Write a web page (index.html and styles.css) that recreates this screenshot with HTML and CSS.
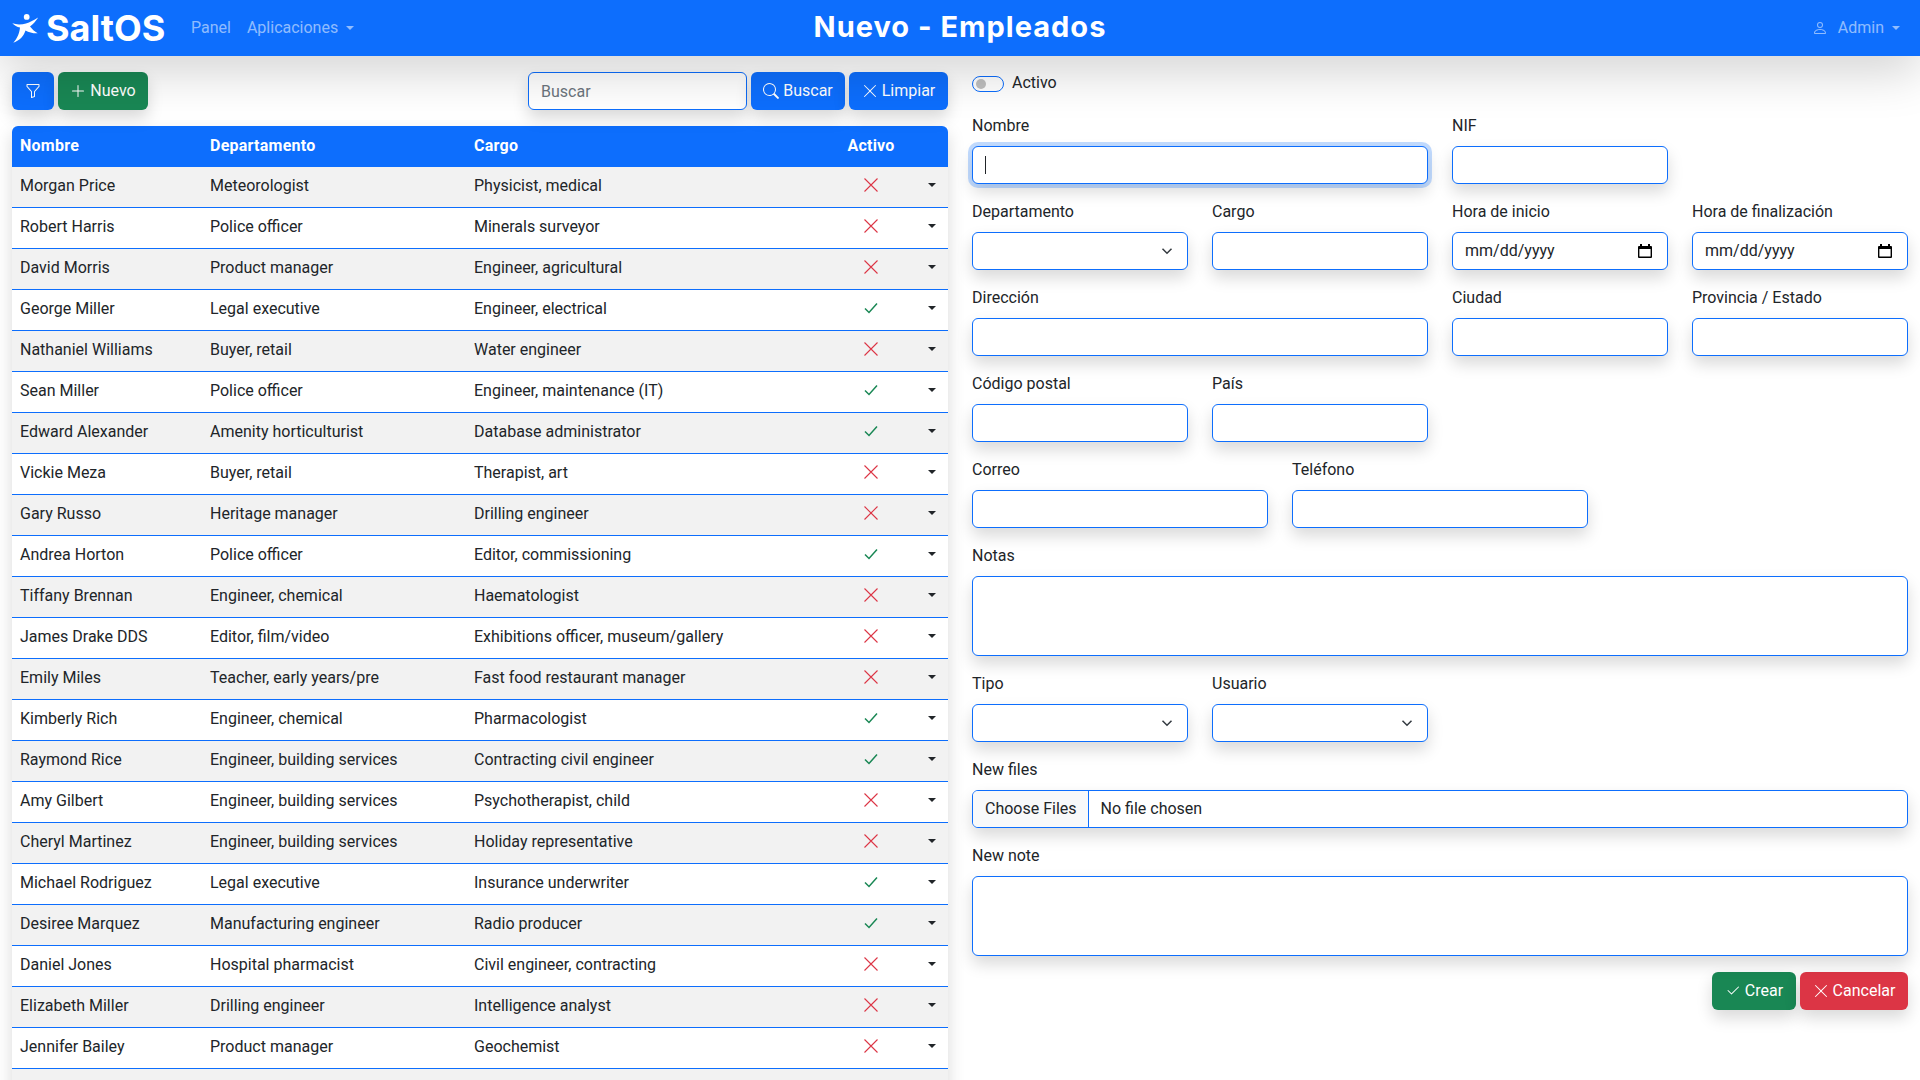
FILE: index.html
```html
<!DOCTYPE html>
<html lang="es">
<head>
<meta charset="utf-8">
<title>SaltOS</title>
<link rel="stylesheet" href="styles.css">
</head>
<body>
<header class="navbar">
  <div class="nav-left">
    <a class="brand"><svg class="logo" viewBox="0 0 26 29"><circle cx="14.700" cy="2.900" r="2.900"/><path d="M.3 9.300C5 11 10 10.500 14 9.500 18 8.500 22 6 26.300 3.300 24 7 21 10.500 18 12.500 20 15 22.500 17.500 25.700 19.300 21 19.500 17 18.500 13.500 16.500 12 21.500 8 26.500 1.300 28.700 5.500 24.500 7.500 18.500 8 13.500 5 13 2.500 11.500.3 9.300Z"/></svg>SaltOS</a>
    <a class="nav-link">Panel</a>
    <a class="nav-link caret">Aplicaciones</a>
  </div>
  <h1 class="page-title">Nuevo - Empleados</h1>
  <div class="nav-right">
    <a class="nav-link caret"><svg class="ico user" viewBox="0 0 16 16"><path d="M8 8a3 3 0 1 0 0-6 3 3 0 0 0 0 6Zm2-3a2 2 0 1 1-4 0 2 2 0 0 1 4 0Zm4 8c0 1-1 1-1 1H3s-1 0-1-1 1-4 6-4 6 3 6 4Zm-1-.004c-.001-.246-.154-.986-.832-1.664C11.516 10.68 10.289 10 8 10c-2.29 0-3.516.68-4.168 1.332-.678.678-.83 1.418-.832 1.664h10Z"/></svg>Admin</a>
  </div>
</header>
<main class="content">
  <section class="left">
    <div class="toolbar">
      <div class="group">
        <button class="btn blue square"><svg class="ico" viewBox="0 0 16 16"><path d="M1.5 1.5A.5.5 0 0 1 2 1h12a.5.5 0 0 1 .5.5v2a.5.5 0 0 1-.128.334L10 8.692V13.500a.5.5 0 0 1-.342.474l-3 1A.5.5 0 0 1 6 14.500V8.692L1.628 3.834A.5.5 0 0 1 1.500 3.500v-2Zm1 .5v1.308l4.372 4.858A.5.5 0 0 1 7 8.500v5.306l2-.666V8.500a.5.5 0 0 1 .128-.334L13.500 3.308V2h-11Z"/></svg></button>
        <button class="btn green w90"><svg class="ico" viewBox="0 0 16 16"><path d="M8 2a.5.5 0 0 1 .5.5v5h5a.5.5 0 0 1 0 1h-5v5a.5.5 0 0 1-1 0v-5h-5a.5.5 0 0 1 0-1h5v-5A.5.5 0 0 1 8 2Z"/></svg>Nuevo</button>
      </div>
      <div class="group">
        <input class="search" type="text" placeholder="Buscar">
        <button class="btn blue w94"><svg class="ico" viewBox="0 0 16 16"><path d="M11.742 10.344a6.500 6.500 0 1 0-1.397 1.398l3.850 3.850a1 1 0 0 0 1.415-1.414l-3.868-3.834ZM12 6.500a5.500 5.500 0 1 1-11 0 5.500 5.500 0 0 1 11 0Z"/></svg>Buscar</button>
        <button class="btn blue w99"><svg class="ico" viewBox="0 0 16 16"><path d="M2.146 2.854a.5.5 0 1 1 .708-.708L8 7.293l5.146-5.147a.5.5 0 0 1 .708.708L8.707 8l5.147 5.146a.5.5 0 0 1-.708.708L8 8.707l-5.146 5.147a.5.5 0 0 1-.708-.708L7.293 8 2.146 2.854Z"/></svg>Limpiar</button>
      </div>
    </div>
    <table class="grid">
      <thead><tr><th class="c1">Nombre</th><th class="c2">Departamento</th><th class="c3">Cargo</th><th class="c4">Activo</th><th class="c5"></th></tr></thead>
      <tbody>
        <tr><td>Morgan Price</td><td>Meteorologist</td><td>Physicist, medical</td><td class="state"><svg class="x" viewBox="0 0 16 16"><path d="M1.500 1.500 14.500 14.500M14.500 1.500 1.500 14.500"/></svg></td><td class="menu"><span class="tri"></span></td></tr>
        <tr><td>Robert Harris</td><td>Police officer</td><td>Minerals surveyor</td><td class="state"><svg class="x" viewBox="0 0 16 16"><path d="M1.500 1.500 14.500 14.500M14.500 1.500 1.500 14.500"/></svg></td><td class="menu"><span class="tri"></span></td></tr>
        <tr><td>David Morris</td><td>Product manager</td><td>Engineer, agricultural</td><td class="state"><svg class="x" viewBox="0 0 16 16"><path d="M1.500 1.500 14.500 14.500M14.500 1.500 1.500 14.500"/></svg></td><td class="menu"><span class="tri"></span></td></tr>
        <tr><td>George Miller</td><td>Legal executive</td><td>Engineer, electrical</td><td class="state"><svg class="ok" viewBox="0 0 16 16"><path d="M2 8.500 6 12.500 14 3.500"/></svg></td><td class="menu"><span class="tri"></span></td></tr>
        <tr><td>Nathaniel Williams</td><td>Buyer, retail</td><td>Water engineer</td><td class="state"><svg class="x" viewBox="0 0 16 16"><path d="M1.500 1.500 14.500 14.500M14.500 1.500 1.500 14.500"/></svg></td><td class="menu"><span class="tri"></span></td></tr>
        <tr><td>Sean Miller</td><td>Police officer</td><td>Engineer, maintenance (IT)</td><td class="state"><svg class="ok" viewBox="0 0 16 16"><path d="M2 8.500 6 12.500 14 3.500"/></svg></td><td class="menu"><span class="tri"></span></td></tr>
        <tr><td>Edward Alexander</td><td>Amenity horticulturist</td><td>Database administrator</td><td class="state"><svg class="ok" viewBox="0 0 16 16"><path d="M2 8.500 6 12.500 14 3.500"/></svg></td><td class="menu"><span class="tri"></span></td></tr>
        <tr><td>Vickie Meza</td><td>Buyer, retail</td><td>Therapist, art</td><td class="state"><svg class="x" viewBox="0 0 16 16"><path d="M1.500 1.500 14.500 14.500M14.500 1.500 1.500 14.500"/></svg></td><td class="menu"><span class="tri"></span></td></tr>
        <tr><td>Gary Russo</td><td>Heritage manager</td><td>Drilling engineer</td><td class="state"><svg class="x" viewBox="0 0 16 16"><path d="M1.500 1.500 14.500 14.500M14.500 1.500 1.500 14.500"/></svg></td><td class="menu"><span class="tri"></span></td></tr>
        <tr><td>Andrea Horton</td><td>Police officer</td><td>Editor, commissioning</td><td class="state"><svg class="ok" viewBox="0 0 16 16"><path d="M2 8.500 6 12.500 14 3.500"/></svg></td><td class="menu"><span class="tri"></span></td></tr>
        <tr><td>Tiffany Brennan</td><td>Engineer, chemical</td><td>Haematologist</td><td class="state"><svg class="x" viewBox="0 0 16 16"><path d="M1.500 1.500 14.500 14.500M14.500 1.500 1.500 14.500"/></svg></td><td class="menu"><span class="tri"></span></td></tr>
        <tr><td>James Drake DDS</td><td>Editor, film/video</td><td>Exhibitions officer, museum/gallery</td><td class="state"><svg class="x" viewBox="0 0 16 16"><path d="M1.500 1.500 14.500 14.500M14.500 1.500 1.500 14.500"/></svg></td><td class="menu"><span class="tri"></span></td></tr>
        <tr><td>Emily Miles</td><td>Teacher, early years/pre</td><td>Fast food restaurant manager</td><td class="state"><svg class="x" viewBox="0 0 16 16"><path d="M1.500 1.500 14.500 14.500M14.500 1.500 1.500 14.500"/></svg></td><td class="menu"><span class="tri"></span></td></tr>
        <tr><td>Kimberly Rich</td><td>Engineer, chemical</td><td>Pharmacologist</td><td class="state"><svg class="ok" viewBox="0 0 16 16"><path d="M2 8.500 6 12.500 14 3.500"/></svg></td><td class="menu"><span class="tri"></span></td></tr>
        <tr><td>Raymond Rice</td><td>Engineer, building services</td><td>Contracting civil engineer</td><td class="state"><svg class="ok" viewBox="0 0 16 16"><path d="M2 8.500 6 12.500 14 3.500"/></svg></td><td class="menu"><span class="tri"></span></td></tr>
        <tr><td>Amy Gilbert</td><td>Engineer, building services</td><td>Psychotherapist, child</td><td class="state"><svg class="x" viewBox="0 0 16 16"><path d="M1.500 1.500 14.500 14.500M14.500 1.500 1.500 14.500"/></svg></td><td class="menu"><span class="tri"></span></td></tr>
        <tr><td>Cheryl Martinez</td><td>Engineer, building services</td><td>Holiday representative</td><td class="state"><svg class="x" viewBox="0 0 16 16"><path d="M1.500 1.500 14.500 14.500M14.500 1.500 1.500 14.500"/></svg></td><td class="menu"><span class="tri"></span></td></tr>
        <tr><td>Michael Rodriguez</td><td>Legal executive</td><td>Insurance underwriter</td><td class="state"><svg class="ok" viewBox="0 0 16 16"><path d="M2 8.500 6 12.500 14 3.500"/></svg></td><td class="menu"><span class="tri"></span></td></tr>
        <tr><td>Desiree Marquez</td><td>Manufacturing engineer</td><td>Radio producer</td><td class="state"><svg class="ok" viewBox="0 0 16 16"><path d="M2 8.500 6 12.500 14 3.500"/></svg></td><td class="menu"><span class="tri"></span></td></tr>
        <tr><td>Daniel Jones</td><td>Hospital pharmacist</td><td>Civil engineer, contracting</td><td class="state"><svg class="x" viewBox="0 0 16 16"><path d="M1.500 1.500 14.500 14.500M14.500 1.500 1.500 14.500"/></svg></td><td class="menu"><span class="tri"></span></td></tr>
        <tr><td>Elizabeth Miller</td><td>Drilling engineer</td><td>Intelligence analyst</td><td class="state"><svg class="x" viewBox="0 0 16 16"><path d="M1.500 1.500 14.500 14.500M14.500 1.500 1.500 14.500"/></svg></td><td class="menu"><span class="tri"></span></td></tr>
        <tr><td>Jennifer Bailey</td><td>Product manager</td><td>Geochemist</td><td class="state"><svg class="x" viewBox="0 0 16 16"><path d="M1.500 1.500 14.500 14.500M14.500 1.500 1.500 14.500"/></svg></td><td class="menu"><span class="tri"></span></td></tr>
        <tr><td>&nbsp;</td><td></td><td></td><td></td><td></td></tr>
      </tbody>
    </table>
  </section>
  <section class="right">
    <div class="switch-row"><span class="switch"><span class="knob"></span></span><span class="switch-label">Activo</span></div>
    <form class="form">
      <div class="f s6"><label>Nombre</label><div class="input focus"><span class="cursor"></span></div></div>
      <div class="f s3"><label>NIF</label><div class="input"></div></div>
      <div class="f s3 blank"></div>

      <div class="f s3"><label>Departamento</label><div class="input sel"><svg class="chev" viewBox="0 0 16 16"><path d="m2 5 6 6 6-6"/></svg></div></div>
      <div class="f s3"><label>Cargo</label><div class="input"></div></div>
      <div class="f s3"><label>Hora de inicio</label><div class="input date">mm/dd/yyyy<svg class="cal" viewBox="0 0 16 16"><path d="M3 1v2H2a1 1 0 0 0-1 1v10a1 1 0 0 0 1 1h12a1 1 0 0 0 1-1V4a1 1 0 0 0-1-1h-1V1h-2v2H5V1H3Zm-.6 5h11.200v7.600H2.400V6Z"/></svg></div></div>
      <div class="f s3"><label>Hora de finalización</label><div class="input date">mm/dd/yyyy<svg class="cal" viewBox="0 0 16 16"><path d="M3 1v2H2a1 1 0 0 0-1 1v10a1 1 0 0 0 1 1h12a1 1 0 0 0 1-1V4a1 1 0 0 0-1-1h-1V1h-2v2H5V1H3Zm-.6 5h11.200v7.600H2.400V6Z"/></svg></div></div>

      <div class="f s6"><label>Dirección</label><div class="input"></div></div>
      <div class="f s3"><label>Ciudad</label><div class="input"></div></div>
      <div class="f s3"><label>Provincia / Estado</label><div class="input"></div></div>

      <div class="f s3"><label>Código postal</label><div class="input"></div></div>
      <div class="f s3"><label>País</label><div class="input"></div></div>
      <div class="f s6 blank"></div>

      <div class="f s4"><label>Correo</label><div class="input"></div></div>
      <div class="f s4"><label>Teléfono</label><div class="input"></div></div>
      <div class="f s4 blank"></div>

      <div class="f s12"><label>Notas</label><div class="input area"></div></div>

      <div class="f s3"><label>Tipo</label><div class="input sel"><svg class="chev" viewBox="0 0 16 16"><path d="m2 5 6 6 6-6"/></svg></div></div>
      <div class="f s3"><label>Usuario</label><div class="input sel"><svg class="chev" viewBox="0 0 16 16"><path d="m2 5 6 6 6-6"/></svg></div></div>
      <div class="f s6 blank"></div>

      <div class="f s12"><label>New files</label><div class="input file"><span class="file-btn">Choose Files</span><span class="file-name">No file chosen</span></div></div>

      <div class="f s12"><label>New note</label><div class="input area"></div></div>
    </form>
    <div class="actions">
      <button class="btn green w84"><svg class="ico" viewBox="0 0 16 16"><path d="M13.854 3.646a.5.5 0 0 1 0 .708l-7 7a.5.5 0 0 1-.708 0l-3.500-3.500a.5.5 0 1 1 .708-.708L6.500 10.293l6.646-6.647a.5.5 0 0 1 .708 0Z"/></svg>Crear</button>
      <button class="btn red w108"><svg class="ico" viewBox="0 0 16 16"><path d="M2.146 2.854a.5.5 0 1 1 .708-.708L8 7.293l5.146-5.147a.5.5 0 0 1 .708.708L8.707 8l5.147 5.146a.5.5 0 0 1-.708.708L8 8.707l-5.146 5.147a.5.5 0 0 1-.708-.708L7.293 8 2.146 2.854Z"/></svg>Cancelar</button>
    </div>
  </section>
</main>
</body>
</html>
```
FILE: styles.css
```css
* { box-sizing: border-box; }
html, body { margin: 0; height: 100%; overflow: hidden; }
body { font-family: Roboto, "Noto Sans", sans-serif; font-size: 16px; line-height: 24px; color: #212529; background: #fff; }

.navbar { position: relative; z-index: 5; height: 56px; background: #0d6efd; display: grid; grid-template-columns: 1fr auto 1fr; align-items: center; padding: 0 12px; box-shadow: 0 16px 48px rgba(0,0,0,.175); }
.nav-left { display: flex; align-items: center; }
.nav-right { display: flex; justify-content: flex-end; }
.brand { display: flex; align-items: center; color: #fff; font-family: Inter, Roboto, sans-serif; font-size: 36px; font-weight: 700; line-height: 40px; width: 171px; white-space: nowrap; }
.logo { width: 26px; height: 29px; fill: #fff; margin-right: 8px; flex: none; }
.nav-link { color: rgba(255,255,255,.55); padding: 0 8px; display: flex; align-items: center; }
.caret::after { content: ""; margin-left: 8px; border-top: 4.800px solid; border-left: 4.800px solid transparent; border-right: 4.800px solid transparent; }
.page-title { margin: -2px 0 0; color: #fff; font-family: Inter, Roboto, sans-serif; font-size: 29px; font-weight: 700; line-height: 36px; letter-spacing: 1px; }
.ico { width: 16px; height: 16px; fill: currentColor; flex: none; }
.user { margin-right: 10px; }

.content { display: grid; grid-template-columns: 1fr 1fr; gap: 24px; padding: 16px 12px 0; }
.left, .right { min-width: 0; }

.toolbar { display: flex; justify-content: space-between; height: 38px; margin-bottom: 16px; }
.group { display: flex; gap: 4px; }
.btn { display: inline-flex; align-items: center; justify-content: center; gap: 4px; height: 38px; padding: 0; border: 1px solid transparent; border-radius: 6px; font: inherit; color: #fff; box-shadow: 0 8px 16px rgba(0,0,0,.15); }
.btn.square { width: 42px; }
.w84 { width: 84px; }
.w90 { width: 90px; }
.w94 { width: 94px; }
.w99 { width: 99px; }
.w108 { width: 108px; }
.blue { background: #0d6efd; }
.green { background: #198754; }
.red { background: #dc3545; }
.search { width: 219px; height: 38px; padding: 6px 12px; border: 1px solid #0d6efd; border-radius: 6px; font: inherit; color: #212529; background: #fff; box-shadow: 0 8px 16px rgba(0,0,0,.15); }
.search::placeholder { color: #6c757d; opacity: 1; }

.grid { width: 100%; border-collapse: separate; border-spacing: 0; table-layout: fixed; box-shadow: 0 8px 16px rgba(0,0,0,.15); }
.grid th { height: 41px; background: #0d6efd; color: #fff; text-align: left; font-weight: 700; padding: 0 8px 2px; letter-spacing: .25px; }
.grid th:first-child { border-top-left-radius: 6px; }
.grid th:last-child { border-top-right-radius: 6px; }
.grid td { height: 41px; padding: 0 8px 2px; border-bottom: 1px solid #0d6efd; color: #212529; white-space: nowrap; }
.grid tbody tr:nth-child(odd) td { background: #f2f2f2; }
.grid tbody tr:nth-child(even) td { background: #fff; }
.c1 { width: 190px; }
.c2 { width: 264px; }
.c3 { width: 373px; }
.c4 { width: 64px; padding: 0 0 2px !important; text-align: center !important; }
.grid .state { padding: 0 0 4px; line-height: 0; }
.state svg { display: block; width: 16px; height: 16px; margin: 0 auto; fill: none; }
.x { stroke: #dc3545; stroke-width: 1.100; }
.ok { stroke: #198754; stroke-width: 1.500; }
.grid .menu { text-align: right; line-height: 0; padding: 0 12px 5px 0; }
.tri { display: inline-block; border-top: 4.800px solid #212529; border-left: 4.800px solid transparent; border-right: 4.800px solid transparent; }

.switch-row { display: flex; align-items: center; gap: 8px; height: 24px; margin: -1px 0 19px; }
.switch { display: flex; align-items: center; width: 32px; height: 16px; margin-top: 1px; padding: 0 3px; border: 1px solid #0d6efd; border-radius: 8px; background: #fff; }
.knob { width: 10px; height: 10px; border-radius: 50%; background: #bfbfbf; }
.form { display: grid; grid-template-columns: repeat(12, 1fr); column-gap: 24px; row-gap: 16px; }
.f label { display: block; height: 24px; margin-bottom: 8px; color: #212529; }
.blank { visibility: hidden; }
.s3 { grid-column: span 3; }
.s4 { grid-column: span 4; }
.s6 { grid-column: span 6; }
.s12 { grid-column: span 12; }
.input { position: relative; display: flex; align-items: center; height: 38px; padding: 0 12px; border: 1px solid #0d6efd; border-radius: 6px; background: #fff; box-shadow: 0 8px 16px rgba(0,0,0,.15); }
.input.focus { box-shadow: 0 0 0 4px rgba(13,110,253,.25), 0 8px 16px rgba(0,0,0,.15); }
.cursor { width: 1px; height: 18px; background: #212529; }
.area { height: 80px; }
.sel { justify-content: flex-end; padding-right: 12px; }
.chev { width: 16px; height: 16px; fill: none; stroke: #343a40; stroke-width: 2; padding: 2px; }
.date { justify-content: space-between; }
.cal { width: 16px; height: 16px; fill: #000; margin-right: 2px; }
.file { padding: 0; overflow: hidden; }
.file-btn { display: flex; align-items: center; height: 100%; padding: 0 11px 0 12px; background: #f8f9fa; border-right: 1px solid #0d6efd; }
.file-name { padding: 0 12px; }
.actions { display: flex; justify-content: flex-end; gap: 4px; margin-top: 16px; }
```
